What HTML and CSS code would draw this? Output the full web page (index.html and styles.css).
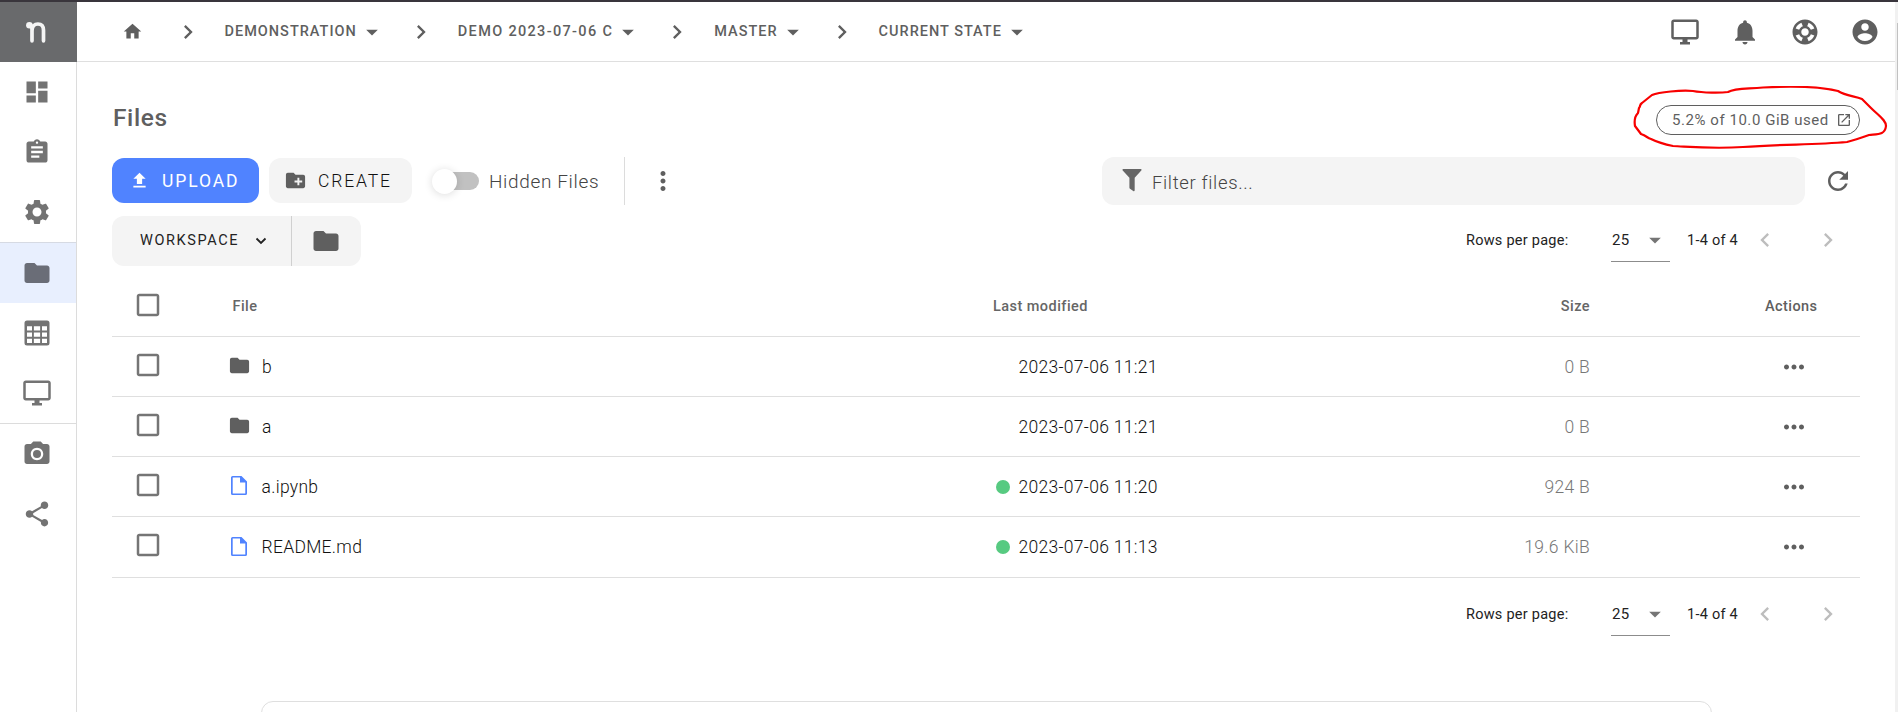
FILE: index.html
```html
<!DOCTYPE html>
<html lang="en">
<head>
<meta charset="utf-8">
<title>Files</title>
<link rel="stylesheet" href="styles.css">
</head>
<body>
<svg class="defs" width="0" height="0" aria-hidden="true">
  <symbol id="home" viewBox="0 0 24 24"><path d="M10 20v-6h4v6h5v-8h3L12 3 2 12h3v8z"/></symbol>
  <symbol id="next" viewBox="0 0 24 24"><path d="M10 6 8.59 7.41 13.17 12l-4.58 4.59L10 18l6-6z"/></symbol>
  <symbol id="prev" viewBox="0 0 24 24"><path d="M15.41 7.41 14 6l-6 6 6 6 1.41-1.41L10.83 12z"/></symbol>
  <symbol id="caret" viewBox="0 0 24 24"><path d="m7 10 5 5 5-5z"/></symbol>
  <symbol id="desktop" viewBox="0 0 24 24"><path d="M21 2H3c-1.1 0-2 .9-2 2v12c0 1.100.9 2 2 2h7v2H8v2h8v-2h-2v-2h7c1.100 0 2-.9 2-2V4c0-1.100-.9-2-2-2zm0 14H3V4h18v12z"/></symbol>
  <symbol id="bell" viewBox="0 0 24 24"><path d="M12 22c1.100 0 2-.9 2-2h-4c0 1.100.89 2 2 2zm6-6v-5c0-3.070-1.640-5.640-4.500-6.320V4c0-.83-.67-1.500-1.500-1.500s-1.500.67-1.500 1.500v.68C7.630 5.360 6 7.920 6 11v5l-2 2v1h16v-1l-2-2z"/></symbol>
  <symbol id="help" viewBox="0 0 24 24"><path d="M12 2C6.480 2 2 6.480 2 12s4.480 10 10 10 10-4.480 10-10S17.520 2 12 2zm7.460 7.120-2.780 1.150c-.51-1.360-1.580-2.440-2.950-2.940l1.150-2.780c2.100.8 3.770 2.470 4.580 4.570zM12 15c-1.660 0-3-1.340-3-3s1.340-3 3-3 3 1.340 3 3-1.340 3-3 3zM9.130 4.540l1.170 2.780c-1.380.5-2.470 1.590-2.980 2.970L4.540 9.130c.81-2.110 2.480-3.780 4.590-4.590zM4.540 14.870l2.780-1.150c.51 1.380 1.590 2.460 2.970 2.960l-1.170 2.780c-2.100-.81-3.770-2.480-4.580-4.590zm10.340 4.590-1.150-2.780c1.370-.51 2.450-1.590 2.950-2.970l2.780 1.170c-.81 2.100-2.480 3.770-4.580 4.580z"/></symbol>
  <symbol id="person" viewBox="0 0 24 24"><path d="M12 2C6.480 2 2 6.480 2 12s4.480 10 10 10 10-4.480 10-10S17.520 2 12 2zm0 3c1.660 0 3 1.340 3 3s-1.340 3-3 3-3-1.340-3-3 1.340-3 3-3zm0 14.200c-2.500 0-4.710-1.280-6-3.220.03-1.990 4-3.080 6-3.080 1.990 0 5.970 1.090 6 3.080-1.290 1.940-3.500 3.220-6 3.220z"/></symbol>
  <symbol id="dashboard" viewBox="0 0 24 24"><path d="M3 13h8V3H3v10zm0 8h8v-6H3v6zm10 0h8V11h-8v10zm0-18v6h8V3h-8z"/></symbol>
  <symbol id="clipboard" viewBox="0 0 24 24"><path d="M19 3h-4.180C14.400 1.840 13.300 1 12 1s-2.400.84-2.820 2H5c-1.100 0-2 .9-2 2v14c0 1.100.9 2 2 2h14c1.100 0 2-.9 2-2V5c0-1.100-.9-2-2-2zm-7 0c.55 0 1 .45 1 1s-.45 1-1 1-1-.45-1-1 .45-1 1-1zm2 14H7v-2h7v2zm3-4H7v-2h10v2zm0-4H7V7h10v2z"/></symbol>
  <symbol id="gear" viewBox="0 0 24 24"><path d="M19.140 12.940c.04-.3.060-.61.060-.94 0-.32-.02-.64-.07-.94l2.030-1.580c.18-.14.23-.41.120-.61l-1.920-3.320c-.12-.22-.37-.29-.59-.22l-2.390.96c-.5-.38-1.030-.7-1.620-.94l-.36-2.540c-.04-.24-.24-.41-.48-.41h-3.840c-.24 0-.43.170-.47.410l-.36 2.540c-.59.240-1.130.570-1.620.940l-2.390-.96c-.22-.08-.47 0-.59.220L2.740 8.870c-.12.210-.08.470.120.610l2.030 1.580c-.05.300-.09.630-.09.940s.02.640.070.940l-2.030 1.580c-.18.140-.23.410-.12.610l1.920 3.320c.12.220.37.290.59.220l2.390-.96c.5.380 1.030.700 1.620.940l.36 2.540c.05.240.24.410.48.410h3.840c.24 0 .44-.17.470-.41l.36-2.540c.59-.24 1.130-.56 1.620-.94l2.390.96c.22.080.47 0 .59-.22l1.920-3.320c.12-.22.070-.47-.12-.61l-2.010-1.580zM12 15.600c-1.980 0-3.600-1.620-3.600-3.600s1.620-3.600 3.600-3.600 3.600 1.620 3.600 3.600-1.620 3.600-3.600 3.600z"/></symbol>
  <symbol id="folder" viewBox="0 0 24 24"><path d="M10 4H4c-1.100 0-1.990.9-1.990 2L2 18c0 1.100.9 2 2 2h16c1.100 0 2-.9 2-2V8c0-1.100-.9-2-2-2h-8l-2-2z"/></symbol>
  <symbol id="table" viewBox="0 0 24 24"><path fill-rule="evenodd" d="M4 2h16a2 2 0 0 1 2 2v16a2 2 0 0 1-2 2H4a2 2 0 0 1-2-2V4a2 2 0 0 1 2-2zM4 6.500v3.500h4V6.500zm5.500 0v3.500h5V6.500zm6.500 0v3.500h4V6.500zM4 11.500v3.500h4v-3.500zm5.500 0v3.500h5v-3.500zm6.500 0v3.500h4v-3.500zM4 16.500V20h4v-3.500zm5.500 0V20h5v-3.500zm6.500 0V20h4v-3.500z"/></symbol>
  <symbol id="camera" viewBox="0 0 24 24"><circle cx="12" cy="12" r="3.200"/><path d="M9 2 7.170 4H4c-1.100 0-2 .9-2 2v12c0 1.100.9 2 2 2h16c1.100 0 2-.9 2-2V6c0-1.100-.9-2-2-2h-3.170L15 2H9zm3 15c-2.760 0-5-2.240-5-5s2.240-5 5-5 5 2.240 5 5-2.240 5-5 5z"/></symbol>
  <symbol id="share" viewBox="0 0 24 24"><path d="M18 16.080c-.76 0-1.440.3-1.960.77L8.910 12.700c.05-.23.090-.46.090-.7s-.04-.47-.09-.7l7.050-4.110c.54.500 1.250.810 2.040.810 1.660 0 3-1.340 3-3s-1.340-3-3-3-3 1.340-3 3c0 .24.040.47.090.7L8.040 9.810C7.500 9.310 6.790 9 6 9c-1.660 0-3 1.340-3 3s1.340 3 3 3c.79 0 1.500-.31 2.040-.81l7.120 4.160c-.05.210-.08.430-.08.650 0 1.610 1.310 2.920 2.920 2.920s2.920-1.310 2.920-2.920-1.310-2.920-2.920-2.920z"/></symbol>
  <symbol id="upload" viewBox="0 0 24 24"><path d="M5 20h14v-2H5v2zm0-10h4v6h6v-6h4l-7-7-7 7z"/></symbol>
  <symbol id="newfolder" viewBox="0 0 24 24"><path d="M20 6h-8l-2-2H4c-1.110 0-1.990.89-1.990 2L2 18c0 1.110.89 2 2 2h16c1.110 0 2-.89 2-2V8c0-1.110-.89-2-2-2zm-1 8h-3v3h-2v-3h-3v-2h3V9h2v3h3v2z"/></symbol>
  <symbol id="dots-v" viewBox="0 0 24 24"><path d="M12 8c1.100 0 2-.9 2-2s-.9-2-2-2-2 .9-2 2 .9 2 2 2zm0 2c-1.100 0-2 .9-2 2s.9 2 2 2 2-.9 2-2-.9-2-2-2zm0 6c-1.100 0-2 .9-2 2s.9 2 2 2 2-.9 2-2-.9-2-2-2z"/></symbol>
  <symbol id="dots-h" viewBox="0 0 24 24"><path d="M6 10c-1.100 0-2 .9-2 2s.9 2 2 2 2-.9 2-2-.9-2-2-2zm12 0c-1.100 0-2 .9-2 2s.9 2 2 2 2-.9 2-2-.9-2-2-2zm-6 0c-1.100 0-2 .9-2 2s.9 2 2 2 2-.9 2-2-.9-2-2-2z"/></symbol>
  <symbol id="filter" viewBox="0 0 20 24"><path d="M.9 0h18.200c.9 0 1.200 1 .6 1.600L12.800 9v13.200c0 .9-.8 1.200-1.500.8l-3.400-2.500c-.4-.3-.6-.7-.6-1.200V9L.3 1.600C-.3 1 .1 0 .9 0z"/></symbol>
  <symbol id="refresh" viewBox="0 0 24 24"><path d="M17.650 6.350C16.200 4.900 14.210 4 12 4c-4.420 0-7.990 3.580-7.990 8s3.570 8 7.990 8c3.730 0 6.840-2.550 7.730-6h-2.080c-.82 2.330-3.040 4-5.650 4-3.310 0-6-2.690-6-6s2.690-6 6-6c1.660 0 3.140.69 4.220 1.780L13 11h7V4l-2.350 2.350z"/></symbol>
  <symbol id="launch" viewBox="0 0 24 24"><path d="M19 19H5V5h7V3H5c-1.110 0-2 .9-2 2v14c0 1.100.89 2 2 2h14c1.100 0 2-.9 2-2v-7h-2v7zM14 3v2h3.590l-9.830 9.830 1.410 1.410L19 6.410V10h2V3h-7z"/></symbol>
  <symbol id="box" viewBox="0 0 24 24"><path d="M19 5v14H5V5h14m0-2H5c-1.100 0-2 .9-2 2v14c0 1.100.9 2 2 2h14c1.100 0 2-.9 2-2V5c0-1.100-.9-2-2-2z"/></symbol>
  <symbol id="doc" viewBox="0 0 16 19"><path fill-rule="evenodd" d="M1.600 0H10.500L16 5.500V17.400A1.600 1.600 0 0 1 14.400 19H1.600A1.600 1.600 0 0 1 0 17.400V1.600A1.600 1.600 0 0 1 1.600 0zM1.700 1.600V17.400H14.300V6.500H9V1.600z"/></symbol>
</svg>

<div class="app">
  <nav class="rail">
    <a class="logo"><svg class="logo-mark" viewBox="0 0 20 22"><circle cx="3.400" cy="4.200" r="3.300" fill="#f4f4f4"/><path d="M3.500 4.200C5.300 4.400 6 5.600 6 8v11.800M6 10c0-4.500 2.500-7 5.900-7 3.500 0 5.600 2.300 5.600 6.300v10.500" fill="none" stroke="#f4f4f4" stroke-width="3.700" stroke-linecap="round"/></svg></a>
    <a class="rail-item"><svg class="i28"><use href="#dashboard"/></svg></a>
    <a class="rail-item"><svg class="i28"><use href="#clipboard"/></svg></a>
    <a class="rail-item"><svg class="i30"><use href="#gear"/></svg></a>
    <a class="rail-item selected"><svg class="i30"><use href="#folder"/></svg></a>
    <a class="rail-item"><svg class="i30"><use href="#table"/></svg></a>
    <a class="rail-item last"><svg class="i30"><use href="#desktop"/></svg></a>
    <a class="rail-item"><svg class="i30"><use href="#camera"/></svg></a>
    <a class="rail-item"><svg class="i30"><use href="#share"/></svg></a>
  </nav>

  <div class="page">
    <header class="topbar">
      <div class="crumbs">
        <svg class="home"><use href="#home"/></svg>
        <svg class="sep"><use href="#next"/></svg>
        <a class="crumb"><span>DEMONSTRATION</span><svg class="i28"><use href="#caret"/></svg></a>
        <svg class="sep"><use href="#next"/></svg>
        <a class="crumb crumb-date"><span>DEMO 2023-07-06 C</span><svg class="i28"><use href="#caret"/></svg></a>
        <svg class="sep"><use href="#next"/></svg>
        <a class="crumb"><span>MASTER</span><svg class="i28"><use href="#caret"/></svg></a>
        <svg class="sep"><use href="#next"/></svg>
        <a class="crumb"><span>CURRENT STATE</span><svg class="i28"><use href="#caret"/></svg></a>
      </div>
      <div class="tools">
        <svg class="i30"><use href="#desktop"/></svg>
        <svg class="i30"><use href="#bell"/></svg>
        <svg class="i30"><use href="#help"/></svg>
        <svg class="i30"><use href="#person"/></svg>
      </div>
    </header>

    <main class="content">
      <div class="title-row">
        <h1 class="title">Files</h1>
        <div class="quota"><span>5.2% of 10.0 GiB used</span><svg class="i16"><use href="#launch"/></svg>
          <svg class="scribble" viewBox="0 0 256 68"><path d="M19 9C26 6 48 4 60 5C70 7 88 7 95 6C102 2 112 3 130 1.500C160 0 185 0 205 5C213 10 222 10 229 13L238 22C246 30 253 34 253 40C252 49 245 48 236 49C222 54 218 55 214 56C180 59 150 58 110 61C80 63 60 61 40 60C30 58 24 56 18 53C14 52 14 50 8 48L2 40C1 34 3 29 5 27L6 22C8 20 6 19 9 17Z" fill="none" stroke="#f80000" stroke-width="2.200" stroke-linejoin="round"/></svg>
        </div>
      </div>

      <div class="toolbar">
        <button class="btn primary"><svg class="up"><use href="#upload"/></svg><span>UPLOAD</span></button>
        <button class="btn create"><svg class="nf"><use href="#newfolder"/></svg><span>CREATE</span></button>
        <span class="switch"><span class="thumb"></span></span>
        <span class="switch-label">Hidden Files</span>
        <span class="rule"></span>
        <svg class="i30 more"><use href="#dots-v"/></svg>
        <div class="filter"><svg class="funnel"><use href="#filter"/></svg><span>Filter files...</span></div>
        <svg class="i30 reload"><use href="#refresh"/></svg>
      </div>

      <div class="subbar">
        <div class="group">
          <div class="workspace"><span>WORKSPACE</span><svg class="chev" viewBox="0 0 12 8"><path d="M1.500 1.500 6 6l4.500-4.500" fill="none" stroke="#222" stroke-width="1.800"/></svg></div>
          <div class="root"><svg class="i30"><use href="#folder"/></svg></div>
        </div>
        <div class="pager">
          <span class="rpp">Rows per page:</span>
          <span class="select"><span>25</span><svg class="i28"><use href="#caret"/></svg></span>
          <span class="range">1-4 of 4</span>
          <svg class="i28 arrow"><use href="#prev"/></svg>
          <svg class="i28 arrow"><use href="#next"/></svg>
        </div>
      </div>

      <div class="table">
        <div class="row head"><svg class="i30 check"><use href="#box"/></svg><span class="name">File</span><span class="date">Last modified</span><span class="size">Size</span><span class="act">Actions</span></div>
        <div class="row"><svg class="i30 check"><use href="#box"/></svg><span class="name"><svg class="fold"><use href="#folder"/></svg><span>b</span></span><span class="date"><i class="dot none"></i>2023-07-06 11:21</span><span class="size">0 B</span><span class="act"><svg class="i30"><use href="#dots-h"/></svg></span></div>
        <div class="row"><svg class="i30 check"><use href="#box"/></svg><span class="name"><svg class="fold"><use href="#folder"/></svg><span>a</span></span><span class="date"><i class="dot none"></i>2023-07-06 11:21</span><span class="size">0 B</span><span class="act"><svg class="i30"><use href="#dots-h"/></svg></span></div>
        <div class="row"><svg class="i30 check"><use href="#box"/></svg><span class="name"><svg class="doc"><use href="#doc"/></svg><span>a.ipynb</span></span><span class="date"><i class="dot"></i>2023-07-06 11:20</span><span class="size">924 B</span><span class="act"><svg class="i30"><use href="#dots-h"/></svg></span></div>
        <div class="row"><svg class="i30 check"><use href="#box"/></svg><span class="name"><svg class="doc"><use href="#doc"/></svg><span>README.md</span></span><span class="date"><i class="dot"></i>2023-07-06 11:13</span><span class="size">19.6 KiB</span><span class="act"><svg class="i30"><use href="#dots-h"/></svg></span></div>
      </div>

      <div class="pager bottom">
        <span class="rpp">Rows per page:</span>
        <span class="select"><span>25</span><svg class="i28"><use href="#caret"/></svg></span>
        <span class="range">1-4 of 4</span>
        <svg class="i28 arrow"><use href="#prev"/></svg>
        <svg class="i28 arrow"><use href="#next"/></svg>
      </div>
      <div class="card"></div>
    </main>
  </div>
  <div class="scroll"><div class="scroll-thumb"></div></div>
</div>
</body>
</html>
```
FILE: styles.css
```css
* { box-sizing: border-box; }
body { margin: 0; background: #fff; font-family: Roboto, "Liberation Sans", sans-serif; color: #222; overflow: hidden; }
svg { display: block; flex: none; fill: currentColor; }
.defs { position: absolute; }
.i16 { width: 16px; height: 16px; }
.i28 { width: 28px; height: 28px; }
.i30 { width: 30px; height: 30px; }

.app { display: flex; height: 712px; border-top: 2px solid #39353c; overflow: hidden; }
.rail { flex: none; width: 77px; border-right: 1px solid #dcdcdc; color: #737373; }
.logo { display: flex; align-items: center; width: 77px; height: 60px; padding-left: 26px; background: #696a6c; }
.logo-mark { width: 20px; height: 22px; }
.rail-item { display: flex; align-items: center; justify-content: center; height: 60px; padding-right: 2px; }
.rail-item.selected { height: 61px; border-top: 1px solid #d6dae3; background: #e8effe; color: #6a6d77; }
.rail-item.last { height: 61px; border-bottom: 1px solid #dcdcdc; }

.page { flex: 1; display: flex; flex-direction: column; min-width: 0; }
.topbar { display: flex; align-items: center; justify-content: space-between; height: 60px; flex: none; padding: 0 15px 0 45px; border-bottom: 1px solid #dfdfdf; color: #5f5f5f; }
.crumbs { display: flex; align-items: center; }
.home { width: 21px; height: 21px; }
.sep { width: 28px; height: 28px; margin: 1px 23px 0 21px; }
.home + .sep { margin-left: 31px; margin-right: 22.500px; }
.crumb { display: flex; align-items: center; font-size: 14.500px; font-weight: 500; letter-spacing: 1px; }
.crumb svg { margin-left: 1px; }
.crumb-date { letter-spacing: 1.330px; }
.tools { display: flex; gap: 30px; }

.content { display: flex; flex-direction: column; flex: 1; padding: 43px 35px 0; min-height: 0; }
.content > * { flex: none; }
.title-row { display: flex; align-items: flex-start; justify-content: space-between; height: 52px; }
.title { margin: -1px 0 0 1px; font-size: 24.500px; line-height: 27px; font-weight: 500; letter-spacing: .6px; color: #5f5f5f; }
.quota { position: relative; display: flex; align-items: center; width: 204px; height: 30px; padding-left: 15px; border: 1px solid #5f5f5f; border-radius: 15px; font-size: 15px; letter-spacing: .55px; color: #5f5f5f; }
.quota span { width: 164px; padding-bottom: 1px; white-space: nowrap; }
.scribble { position: absolute; left: -24px; top: -20.500px; width: 256px; height: 68px; }

.toolbar { display: flex; align-items: center; height: 48px; }
.btn { display: flex; align-items: center; height: 45px; margin-bottom: 1px; border: 0; border-radius: 12px; padding: 0 0 0 17px; font: 400 17.500px Roboto, sans-serif; }
.btn span { padding-top: 1px; }
.primary { width: 147px; margin-right: 10px; background: #5083ff; color: #fff; letter-spacing: 1.900px; }
.up { width: 21px; height: 23px; margin-right: 12px; }
.create { width: 143px; padding-left: 15px; background: #f4f4f4; letter-spacing: 1.850px; color: #111; font-weight: 300; }
.nf { width: 23px; height: 23px; margin-right: 11px; color: #5f5f5f; }
.switch { display: flex; align-items: center; width: 39px; height: 18px; margin-left: 28px; border-radius: 9px; background: #c1c1c1; }
.thumb { width: 25px; height: 25px; flex: none; margin-left: -8px; border-radius: 50%; background: #fff; box-shadow: 0 1px 8px rgba(0,0,0,.14); }
.switch-label { width: 135px; margin-left: 10px; font-size: 19px; font-weight: 300; letter-spacing: .65px; color: #444; }
.rule { width: 1px; height: 48px; background: #dcdcdc; }
.more { margin-left: 22.500px; color: #5f5f5f; }
.filter { display: flex; align-items: center; width: 703px; height: 48px; margin-left: auto; padding-left: 20px; border-radius: 12px; background: #f4f4f4; font-size: 18.500px; font-weight: 300; letter-spacing: .65px; color: #444; }
.filter span { padding-top: 3px; }
.funnel { width: 20px; height: 23px; margin: 0 10px 1px 0; color: #666; }
.reload { margin: 0 7px 0 18px; color: #5f5f5f; }

.subbar { display: flex; justify-content: space-between; align-items: flex-start; height: 70px; padding-top: 11px; }
.group { display: flex; height: 50px; border-radius: 12px; background: #f4f4f4; overflow: hidden; }
.workspace { display: flex; align-items: center; width: 180px; padding: 0 0 2px 28px; border-right: 1px solid #d0d0d0; font-size: 14.500px; font-weight: 400; letter-spacing: 1.600px; }
.workspace span { width: 114.500px; }
.chev { width: 12px; height: 8px; margin-top: 2px; }
.root { display: flex; align-items: center; width: 69px; padding-left: 18.500px; color: #5f5f5f; }
.pager { display: flex; align-items: center; align-self: flex-end; height: 50px; font-size: 14.500px; letter-spacing: .25px; }
.subbar .pager { align-self: flex-start; margin-top: -1px; }
.subbar .pager > span:not(.select) { padding-top: 1px; }
.subbar .select span, .subbar .select svg { margin-top: 1px; }
.rpp { width: 145px; }
.select { display: flex; align-items: center; width: 59px; height: 44px; border-bottom: 1px solid #8c8c8c; }
.select span { width: 30px; padding-left: 1px; font-size: 15px; }
.select svg { color: #757575; }
.range { width: 64px; margin-left: 17px; }
.arrow { color: #bdbdbd; }
.arrow + .arrow { margin: 0 18.500px 0 34.500px; }

.table { display: flex; flex-direction: column; }
.row { display: grid; grid-template-columns: 118px 766px 420px 174px 1fr; align-items: center; height: 60px; border-bottom: 1px solid #dfdfdf; font-size: 17.500px; font-weight: 300; letter-spacing: .3px; color: #111; }
.row:last-child { height: 61px; }
.head { height: 62px; font-size: 14.500px; font-weight: 500; letter-spacing: .45px; color: #666; }
.head span { padding-top: 2px; }
.check { margin: 0 0 4px 20.500px; color: #757575; }
.head .check { margin-bottom: 2px; }
.name { display: flex; align-items: center; }
.head .name { padding-left: 2.500px; }
.fold { width: 23px; height: 23px; margin: 0 11px 3px -2px; color: #5f5f5f; }
.doc { width: 16px; height: 19px; margin: 0 14.500px 2px 1px; color: #5083ff; }
.date { display: flex; align-items: center; }
.head .date { margin-left: -3px; }
.dot { width: 14px; height: 14px; margin-right: 8.500px; border-radius: 50%; background: #57ca81; }
.dot.none { visibility: hidden; }
.size { text-align: right; color: #777; }
.head .size { color: #666; }
.act { justify-self: end; padding-right: 51px; color: #5f5f5f; }
.head .act { padding-right: 42.500px; }

.bottom { margin-top: 11px; }
.card { width: 1451px; height: 60px; margin: 62px 0 0 149px; border: 1px solid #dfdfdf; border-radius: 12px; }
.scroll { width: 3px; flex: none; padding: 21px 0 0 2px; background: #f1f1f1; }
.scroll-thumb { height: 67px; background: #c1c1c1; }
```
